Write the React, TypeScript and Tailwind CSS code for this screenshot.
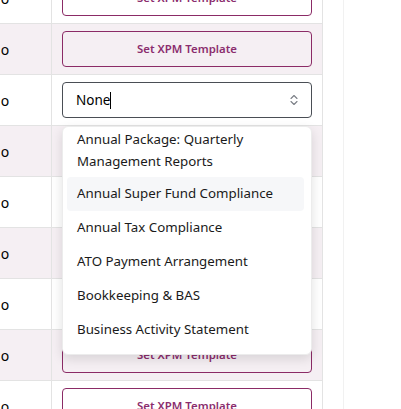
import React from "react";

const rows = [0, 1, 2, 3, 4, 5, 6, 7, 8];
const options = [
  "Annual Super Fund Compliance",
  "Annual Tax Compliance",
  "ATO Payment Arrangement",
  "Bookkeeping & BAS",
  "Business Activity Statement",
];

function Chevrons() {
  return (
    <svg width="10" height="14" viewBox="0 0 10 14" fill="none" stroke="#7b7f86" strokeWidth="1.1" strokeLinecap="round" strokeLinejoin="round">
      <path d="M2 5.5 L5 2.5 L8 5.5" />
      <path d="M2 8.5 L5 11.5 L8 8.5" />
    </svg>
  );
}

export default function App() {
  return (
    <div className="w-[401px] h-[409px] overflow-hidden bg-white flex" style={{ fontFamily: '"Noto Sans", "Open Sans", sans-serif' }}>
      <div className="ml-[-26px] mt-[-27px] flex flex-col border-r border-[#e3e3e3] self-start">
        {rows.map((i) => {
          const pink = i % 2 === 1;
          return (
            <div key={i} className={`flex h-[51px] border-b border-[#e3e3e3] ${pink ? "bg-[#f5eff3]" : "bg-white"}`}>
              <div className="w-[78px] border-r border-[#e3e3e3] pl-[16px] flex items-center text-[14px] text-black">No</div>
              <div className="w-[270px] px-[10px] py-[7px] relative">
                {i === 2 ? (
                  <>
                    <div className="h-[36px] rounded-[4px] border border-[#4a4e55] bg-white flex items-center justify-between pl-[13px] pr-[12px]">
                      <span className="text-[13.5px] text-black flex items-center">
                        None<span className="inline-block w-[1px] h-[17px] bg-black" />
                      </span>
                      <Chevrons />
                    </div>
                    <div className="absolute left-[10px] top-[51px] w-[250px] h-[229px] z-10 bg-white rounded-[6px] border border-[#ececec] shadow-[0_4px_12px_rgba(0,0,0,0.12)] overflow-hidden text-[13.3px] text-[#1a1a1a]">
                      <div className="px-[14px] pt-[1px] pb-[5px] leading-[22px]">
                        Annual Package: Quarterly Management Reports
                      </div>
                      <div className="pl-[4px] pr-[7px]">
                        {options.map((o, idx) => (
                          <div key={o} className={`h-[34px] px-[10px] flex items-center rounded-[4px] ${idx === 0 ? "bg-[#f6f7f9]" : ""}`}>
                            {o}
                          </div>
                        ))}
                      </div>
                    </div>
                  </>
                ) : (
                  <div className="h-[36px] rounded-[4px] border border-[#8b2b66] flex items-center justify-center text-[11.4px] font-semibold text-[#8b2d6e]">
                    Set XPM Template
                  </div>
                )}
              </div>
            </div>
          );
        })}
      </div>
      <div className="w-[20px]" />
      <div className="border-l border-[#f1f1f1] h-full" />
    </div>
  );
}
